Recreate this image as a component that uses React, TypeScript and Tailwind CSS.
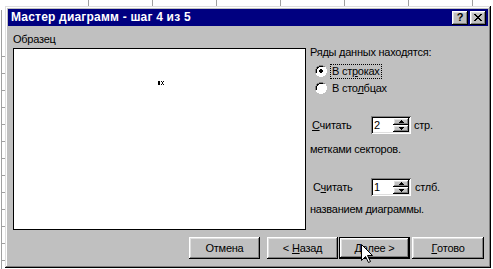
const raised =
  "shadow-[inset_-1px_-1px_#000,inset_1px_1px_#fff,inset_-2px_-2px_#808080,inset_2px_2px_#dfdfdf]";
const sunken =
  "shadow-[inset_1px_1px_#808080,inset_-1px_-1px_#fff,inset_2px_2px_#000,inset_-2px_-2px_#dfdfdf]";

const Radio = ({ checked }: { checked?: boolean }) => (
  <svg width="12" height="12" viewBox="0 0 12 12" className="shrink-0">
    <path d="M4 0h4v1h2v1h1v2h1v4h-1v2h-1v1h-2v1h-4v-1h-2v-1h-1v-2h-1v-4h1v-2h1v-1h2z" fill="#fff" />
    <path d="M4 0h4v1h2v1h-2v-1h-4v1h-2v2h-1v4h-1v-4h1v-2h1v-1h2z" fill="#808080" />
    <path d="M4 1h4v1h-4v1h-1v1h-1v4h-1v-4h1v-2h2z" fill="#000" />
    <path d="M10 2h1v2h1v4h-1v2h-1v1h-2v1h-4v-1h4v-1h2v-2h1v-4h-1z" fill="#fff" />
    <path d="M4 2h4v1h1v1h1v4h-1v1h-1v1h-4v-1h-1v-1h-1v-4h1v-1h1z" fill="#fff" />
    {checked && <path d="M5 4h2v1h1v2h-1v1h-2v-1h-1v-2h1z" fill="#000" />}
  </svg>
);

const Spin = ({ value }: { value: string }) => (
  <div className={`flex h-[18px] w-[40px] bg-white p-[2px] ${sunken}`}>
    <span className="flex-1 pl-[1px] leading-[14px]">{value}</span>
    <div className="flex w-[16px] flex-col">
      <div className={`flex h-[7px] items-center justify-center bg-[#c0c0c0] ${raised}`}>
        <svg width="5" height="3" viewBox="0 0 5 3">
          <path d="M2 0h1v1h1v1h1v1h-5v-1h1v-1h1z" fill="#000" />
        </svg>
      </div>
      <div className={`flex h-[7px] items-center justify-center bg-[#c0c0c0] ${raised}`}>
        <svg width="5" height="3" viewBox="0 0 5 3">
          <path d="M0 0h5v1h-1v1h-1v1h-1v-1h-1v-1h-1z" fill="#000" />
        </svg>
      </div>
    </div>
  </div>
);

const Button = ({ children, w, isDefault }: { children: React.ReactNode; w: string; isDefault?: boolean }) => (
  <div className={`${w} h-[22px] ${isDefault ? "border border-black" : ""}`}>
    <div className={`flex h-full items-center justify-center bg-[#c0c0c0] ${raised}`}>{children}</div>
  </div>
);

const App = () => {
  const topTicks = [88, 152, 216, 280, 344, 408, 472];
  const leftTicks = [56, 73, 90, 107, 124, 141, 158, 175, 192, 209, 226, 243, 260];
  return (
    <div className="relative h-[269px] w-[493px] overflow-hidden bg-white pl-[5px] pt-[6px] font-['Liberation_Sans',Arial,sans-serif] text-[11px] tracking-[-0.25px] text-black">
      <svg className="absolute left-0 top-0" width="493" height="269">
        {topTicks.map((x) => (
          <line key={x} x1={x + 0.5} y1="0" x2={x + 0.5} y2="6" stroke="#a0a0a0" />
        ))}
        <line x1="1.5" y1="10" x2="1.5" y2="269" stroke="#a0a0a0" />
        {leftTicks.map((y) => (
          <line key={y} x1="1" y1={y + 0.5} x2="5" y2={y + 0.5} stroke="#a0a0a0" />
        ))}
      </svg>

      <div className="relative h-[262px] w-[486px] bg-[#c0c0c0] p-[3px] shadow-[inset_-1px_-1px_#000,inset_1px_1px_#dfdfdf,inset_-2px_-2px_#808080,inset_2px_2px_#fff]">
        {/* title bar */}
        <div className="flex h-[17px] items-center justify-between bg-[#000080] pl-[3px] pr-[2px]">
          <span className="text-[12px] font-bold leading-[17px] tracking-[0.2px] text-white">
            Мастер диаграмм - шаг 4 из 5
          </span>
          <div className="flex gap-[2px]">
            <div className={`flex h-[14px] w-[16px] items-center justify-center bg-[#c0c0c0] text-[11px] font-bold leading-none ${raised}`}>
              ?
            </div>
            <div className={`flex h-[14px] w-[16px] items-center justify-center bg-[#c0c0c0] ${raised}`}>
              <svg width="8" height="7" viewBox="0 0 8 7">
                <path d="M0 0h2v1h1v1h2v-1h1v-1h2v1h-1v1h-1v1h-1v1h1v1h1v1h1v1h-2v-1h-1v-1h-2v1h-1v1h-2v-1h1v-1h1v-1h1v-1h-1v-1h-1v-1h-1z" fill="#000" />
              </svg>
            </div>
          </div>
        </div>

        {/* body */}
        <div className="flex pl-[5px] pt-[7px]">
          <div className="w-[293px]">
            <div className="h-[15px] leading-[13px]">Образец</div>
            <div className="relative h-[182px] w-[293px] border border-black bg-white">
              <svg className="absolute left-[144px] top-[32px]" width="6" height="4" viewBox="0 0 6 4">
                <rect x="0" y="0" width="2" height="4" fill="#000" />
                <path d="M3 0h1v1h-1zM5 0h1v1h-1zM4 1h1v2h-1zM3 3h1v1h-1zM5 3h1v1h-1z" fill="#000" />
              </svg>
            </div>
          </div>

          <div className="ml-[4px] pt-[13px]">
            <div className="leading-[13px]">Ряды данных находятся:</div>
            <div className="ml-[5px] mt-[4px] flex flex-col gap-[1px]">
              <div className="flex h-[16px] items-center">
                <Radio checked />
                <span className="ml-[3px] border border-dotted border-black px-[1px] leading-[13px]">
                  В ст<u className="underline-offset-1">р</u>оках
                </span>
              </div>
              <div className="flex h-[16px] items-center">
                <Radio />
                <span className="ml-[4px] px-[1px] leading-[13px]">
                  В сто<u className="underline-offset-1">л</u>бцах
                </span>
              </div>
            </div>

            <div className="mt-[20px] flex items-center pl-[2px]">
              <span className="w-[59px]">
                <u className="underline-offset-1">С</u>читать
              </span>
              <Spin value="2" />
              <span className="ml-[3px]">стр.</span>
            </div>
            <div className="mt-[9px] leading-[13px]">метками секторов.</div>

            <div className="mt-[22px] flex items-center pl-[3px]">
              <span className="w-[58px]">
                С<u className="underline-offset-1">ч</u>итать
              </span>
              <Spin value="1" />
              <span className="ml-[4px]">стлб.</span>
            </div>
            <div className="mt-[7px] leading-[13px]">названием диаграммы.</div>
          </div>
        </div>

        {/* buttons */}
        <div className="mt-[7px] flex justify-end pr-[4px]">
          <Button w="w-[71px]">Отмена</Button>
          <div className="ml-[7px]">
            <Button w="w-[71px]">
              &lt; <u className="ml-[3px] underline-offset-1">Н</u>азад
            </Button>
          </div>
          <div className="ml-[1px]">
            <Button w="w-[71px]" isDefault>
              <u className="underline-offset-1">Д</u>алее &gt;
            </Button>
          </div>
          <div className="ml-[2px]">
            <Button w="w-[72px]">
              <u className="underline-offset-1">Г</u>отово
            </Button>
          </div>
        </div>

        {/* mouse pointer */}
        <svg className="absolute left-[356px] top-[238px]" width="12" height="20" viewBox="0 0 12 20">
          <path d="M0.5 0.5V16.5L4.5 12.5L7.5 18.5L9.5 17.5L6.5 11.5H11.5Z" fill="#fff" stroke="#000" strokeLinejoin="miter" />
        </svg>
      </div>
    </div>
  );
};

export default App;
